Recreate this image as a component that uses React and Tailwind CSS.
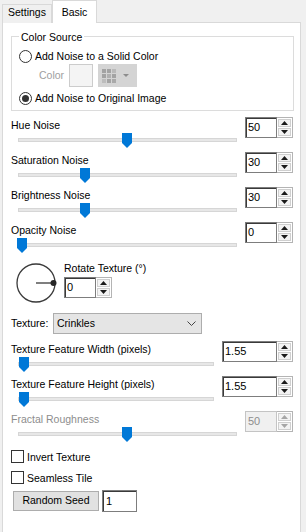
import React from 'react'

function Arrows({ disabled }) {
  const c = disabled ? '#a6a6a6' : '#1a1a1a'
  return (
    <div className="flex w-[16px] flex-col gap-px border-y border-r border-[#b4b4b4] bg-white p-px">
      <div className="flex flex-1 items-center justify-center border border-[#cfcfcf] bg-[#f3f3f3]">
        <svg width="7" height="4" viewBox="0 0 7 4"><path d="M3.5 0 L7 4 H0 Z" fill={c} /></svg>
      </div>
      <div className="flex flex-1 items-center justify-center border border-[#cfcfcf] bg-[#f3f3f3]">
        <svg width="7" height="4" viewBox="0 0 7 4"><path d="M0 0 H7 L3.5 4 Z" fill={c} /></svg>
      </div>
    </div>
  )
}

function SpinBox({ value, wide, disabled }) {
  return (
    <div className="mr-px flex h-[21px]">
      <div
        className={`${wide ? 'w-[55px]' : 'w-[32px]'} border leading-[19px] pl-[2px] text-[11px] ${
          disabled
            ? 'border-[#c4c4c4] bg-[#f0f0f0] text-[#8d8d8d]'
            : 'border-[#7d7d7d] bg-white shadow-[inset_1px_1px_0_#3a3a3a]'
        }`}
      >
        {value}
      </div>
      <Arrows disabled={disabled} />
    </div>
  )
}

function Slider({ value }) {
  return (
    <div className="relative ml-[7px] h-[16px]">
      <div className="absolute inset-x-0 top-[6px] h-[4px] border border-[#d6d6d6] bg-[#e7e7e7]" />
      <svg
        className="absolute top-px"
        style={{ left: `calc((100% - 10px) * ${value / 100} - 1px)` }}
        width="10"
        height="15"
        viewBox="0 0 10 15"
      >
        <path d="M0 0 H10 V10 L5 15 L0 10 Z" fill="#0078d7" />
      </svg>
    </div>
  )
}

function SliderRow({ label, pos, value, wide, disabled }) {
  return (
    <div className="flex h-[35px] items-start">
      <div className="flex-1 pr-[8px]">
        <div className={`mt-px leading-[14px] ${disabled ? 'text-[#8d8d8d]' : ''}`}>{label}</div>
        <Slider value={pos} />
      </div>
      <SpinBox value={value} wide={wide} disabled={disabled} />
    </div>
  )
}

function Radio({ checked, children }) {
  return (
    <div className="flex h-[14px] items-center">
      <span className="flex size-[13px] items-center justify-center rounded-full border border-[#333] bg-white">
        {checked && <span className="size-[7px] rounded-full bg-[#333]" />}
      </span>
      <span className="ml-[3px] leading-[14px]">{children}</span>
    </div>
  )
}

function Check({ children }) {
  return (
    <div className="flex h-[13px] items-center">
      <span className="size-[13px] border border-[#333] bg-white" />
      <span className="ml-[3px] leading-[14px]">{children}</span>
    </div>
  )
}

const gridColors = ['#a3a3a3', '#a3a3a3', '#b9b9b9', '#a3a3a3', '#b0b0b0', '#a3a3a3', '#bcbcbc', '#a3a3a3', '#a9a9a9']

export default function App() {
  return (
    <div className="h-[532px] w-[306px] overflow-hidden bg-[#f0f0f0] font-['Liberation_Sans',Arial,sans-serif] text-[10.5px] text-black">
      <div className="flex h-[23px] items-end pl-[2px]">
        <div className="flex h-[19px] w-[50px] items-center justify-center border border-b-0 border-[#d9d9d9] bg-[#f0f0f0] pb-[2px]">
          Settings
        </div>
        <div className="relative z-10 flex h-[23px] w-[45px] items-start justify-center border border-b-0 border-[#d9d9d9] bg-white pt-[4px]">
          Basic
        </div>
      </div>

      <div className="-mt-px ml-[2px] h-[520px] w-[299px] border border-[#d9d9d9] bg-white pl-[8px] pr-[6px]">
        <div className="relative mt-[13px] h-[75px] border border-[#dcdcdc] pl-[7px] pt-[12px]">
          <span className="absolute -top-[7px] left-[7px] bg-white px-[2px] leading-[14px]">Color Source</span>
          <Radio>Add Noise to a Solid Color</Radio>
          <div className="mt-px flex h-[23px] items-center">
            <span className="ml-[20px] w-[30px] text-[#a0a0a0]">Color</span>
            <div className="h-[23px] w-[24px] border border-[#cccccc] bg-[#f4f4f4]" />
            <div className="ml-[5px] flex h-[23px] w-[39px] items-center bg-[#d4d4d4] pl-[4px]">
              <div className="grid grid-cols-3 gap-px">
                {gridColors.map((c, i) => (
                  <span key={i} className="size-[4px]" style={{ background: c }} />
                ))}
              </div>
              <svg className="ml-[7px]" width="6" height="3" viewBox="0 0 6 3"><path d="M0 0 H6 L3 3 Z" fill="#8c8c8c" /></svg>
            </div>
          </div>
          <div className="mt-[4px]">
            <Radio checked>Add Noise to Original Image</Radio>
          </div>
        </div>

        <div className="mt-[6px]">
          <SliderRow label="Hue Noise" pos={50} value="50" />
          <SliderRow label="Saturation Noise" pos={30} value="30" />
          <SliderRow label="Brightness Noise" pos={30} value="30" />
          <SliderRow label="Opacity Noise" pos={0} value="0" />
        </div>

        <div className="mt-[4px] flex">
          <svg className="ml-[4px] mt-px" width="42" height="42" viewBox="0 0 42 42">
            <circle cx="21" cy="21" r="19" fill="none" stroke="#3a3a3a" strokeWidth="1.3" />
            <line x1="21" y1="21" x2="38" y2="21" stroke="#3a3a3a" strokeWidth="1.3" />
            <circle cx="38.5" cy="21" r="3" fill="#262626" />
          </svg>
          <div className="ml-[7px]">
            <div className="leading-[14px]">Rotate Texture (°)</div>
            <div className="mt-[2px]">
              <SpinBox value="0" />
            </div>
          </div>
        </div>

        <div className="mt-[9px] flex h-[21px] items-center">
          <span className="w-[42px]">Texture:</span>
          <div className="flex h-[21px] w-[149px] items-center justify-between border border-[#adadad] bg-[#e5e5e5] pl-[3px] pr-[5px]">
            <span>Crinkles</span>
            <svg width="9" height="5" viewBox="0 0 9 5"><path d="M0.5 0.5 L4.5 4.5 L8.5 0.5" fill="none" stroke="#444" strokeWidth="1" /></svg>
          </div>
        </div>

        <div className="mt-[7px]">
          <SliderRow label="Texture Feature Width (pixels)" pos={1} value="1.55" wide />
          <SliderRow label="Texture Feature Height (pixels)" pos={1} value="1.55" wide />
          <SliderRow label="Fractal Roughness" pos={50} value="50" disabled />
        </div>

        <div className="mt-[4px]">
          <Check>Invert Texture</Check>
          <div className="mt-[8px]">
            <Check>Seamless Tile</Check>
          </div>
        </div>

        <div className="mt-[6px] flex items-center">
          <button className="ml-[2px] h-[20px] w-[86px] border border-[#adadad] bg-[#e1e1e1] text-[10.5px]">
            Random Seed
          </button>
          <div className="ml-[3px] h-[22px] w-[35px] border border-[#7d7d7d] bg-white pl-[3px] text-[11px] leading-[20px] shadow-[inset_1px_1px_0_#3a3a3a]">
            1
          </div>
        </div>
      </div>
    </div>
  )
}
